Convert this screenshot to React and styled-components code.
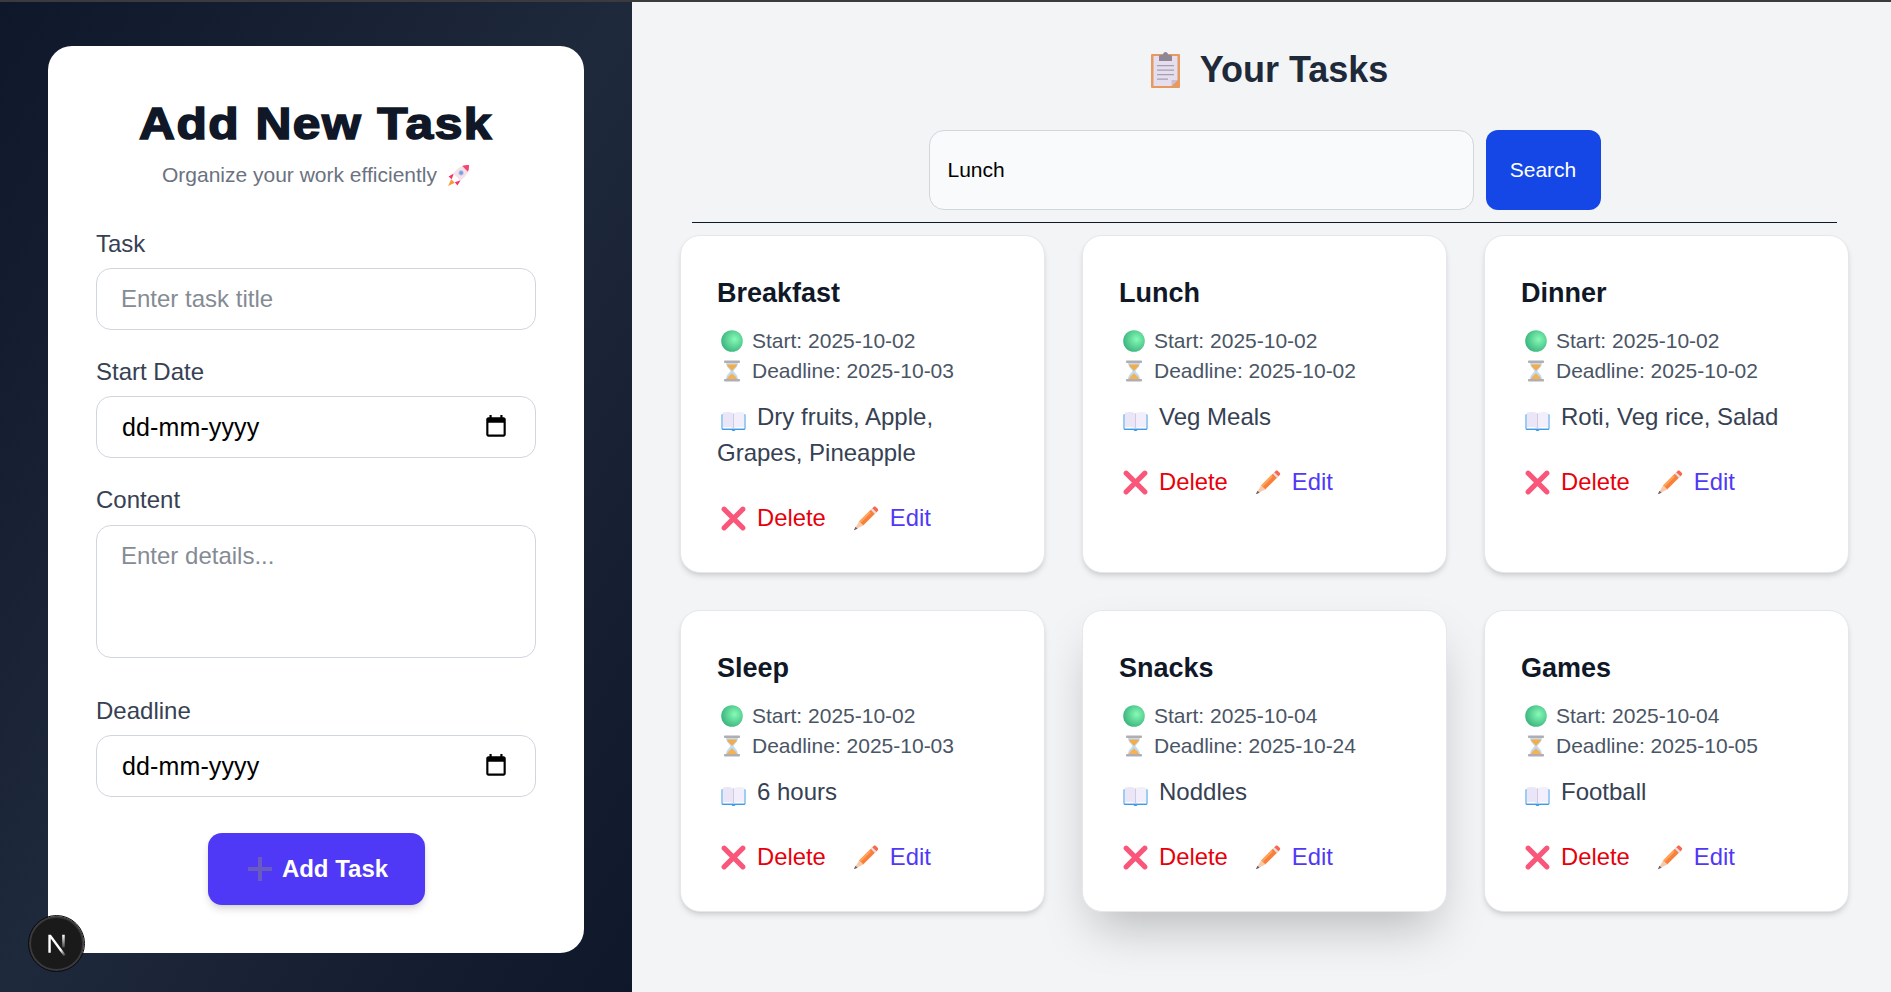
import React from "react";
import styled, { createGlobalStyle } from "styled-components";

const Global = createGlobalStyle`
  html, body { margin: 0; padding: 0; height: 100%; overflow: hidden; }
  body { font-family: "Liberation Sans", Arial, sans-serif; background: #f3f4f6; }
  * { box-sizing: border-box; }
`;

const Page = styled.div`
  height: 992px;
  display: flex;
  flex-direction: column;
  overflow: hidden;
`;
const TopEdge = styled.div`
  height: 2px;
  flex: none;
  background: #3b3b3d;
`;
const Columns = styled.div`
  flex: 1;
  display: flex;
  min-height: 0;
`;
const Sidebar = styled.aside`
  width: 632px;
  flex: none;
  padding: 44px 48px;
  background: linear-gradient(to bottom right, #0f172a, #1e293b 50%, #0f172a);
`;
const FormCard = styled.form`
  background: #fff;
  border-radius: 24px;
  padding: 48px;
  height: 907px;
`;
const FormTitle = styled.h1`
  margin: 2px 0 8px;
  font-size: 44px;
  line-height: 56px;
  font-weight: 900;
  letter-spacing: 1.3px;
  -webkit-text-stroke: 1.6px #101828;
  color: #101828;
  text-align: center;
  transform: scaleX(1.13);
`;
const FormSubtitle = styled.p`
  margin: 0 0 38px;
  font-size: 21px;
  line-height: 30px;
  color: #6b7280;
  display: flex;
  justify-content: center;
  align-items: center;
  gap: 10px;
`;
const Field = styled.div`
  margin-bottom: ${(p) => p.$gap ?? 26}px;
`;
const Label = styled.label`
  display: block;
  margin-bottom: ${(p) => p.$gap ?? 8}px;
  font-size: 24px;
  line-height: 32px;
  color: #364153;
`;
const controlBase = `
  display: block;
  width: 100%;
  border: 1.5px solid #d1d5dc;
  border-radius: 15px;
  background: #fff;
  font-family: "Liberation Sans", Arial, sans-serif;
  font-size: 24px;
  outline: none;
  color: #000;
  &::placeholder { color: #858b95; opacity: 1; }
`;
const TextInput = styled.input`
  ${controlBase}
  height: 62px;
  padding: 0 24px;
`;
const DateBox = styled.div`
  ${controlBase}
  height: 62px;
  padding: 0 26px 0 25px;
  font-size: 25px;
  letter-spacing: 0.12px;
  display: flex;
  align-items: center;
  justify-content: space-between;
`;
const CalendarIcon = styled.svg`
  width: 26px;
  height: 26px;
  fill: #000;
`;
const TextArea = styled.textarea`
  ${controlBase}
  height: 133px;
  padding: 16px 24px;
  resize: none;
  line-height: 28px;
`;
const SubmitRow = styled.div`
  display: flex;
  justify-content: center;
  margin-top: 36px;
`;
const SubmitButton = styled.button`
  width: 217px;
  height: 72px;
  padding: 0 0 0 4px;
  border: none;
  border-radius: 14px;
  background: #4f39f6;
  color: #fff;
  font-family: inherit;
  font-size: 24px;
  font-weight: 700;
  display: flex;
  align-items: center;
  justify-content: center;
  gap: 10px;
  box-shadow: 0 5px 8px -1px rgba(0, 0, 0, 0.14), 0 2px 5px -2px rgba(0, 0, 0, 0.1);
`;

const Main = styled.main`
  flex: 1;
  min-width: 0;
  padding: 48px 42px 0 48px;
  background: #f3f4f6;
`;
const Heading = styled.h2`
  margin: 0 0 40px;
  height: 40px;
  padding-left: 2px;
  display: flex;
  align-items: center;
  justify-content: center;
  gap: 12px;
  font-size: 36px;
  line-height: 40px;
  font-weight: 700;
  color: #1e2939;
`;
const HeadingIcon = styled.span`
  width: 45px;
  display: flex;
  justify-content: center;
`;
const SearchBar = styled.div`
  display: flex;
  justify-content: center;
  gap: 12px;
`;
const SearchInput = styled.input`
  width: 545px;
  height: 80px;
  padding: 0 18px;
  border: 1.5px solid #d1d5dc;
  border-radius: 15px;
  background: #f9fafb;
  font-family: inherit;
  font-size: 21px;
  color: #000;
  outline: none;
`;
const SearchButton = styled.button`
  width: 115px;
  height: 80px;
  border: none;
  border-radius: 12px;
  background: #1447e6;
  color: #fff;
  font-family: inherit;
  font-size: 21px;
`;
const Rule = styled.hr`
  height: 1px;
  margin: 12px;
  border: none;
  background: #101828;
`;
const Grid = styled.div`
  display: grid;
  grid-template-columns: repeat(3, 1fr);
  gap: 37px;
`;
const Card = styled.article`
  padding: 39px 36px 36px;
  background: #fff;
  border: 1px solid #e5e7eb;
  border-radius: 20px;
  box-shadow: ${(p) =>
    p.$raised
      ? "0 25px 50px -12px rgba(0,0,0,0.25)"
      : "0 4px 6px -1px rgba(0,0,0,0.12), 0 2px 4px -2px rgba(0,0,0,0.1)"};
`;
const CardTitle = styled.h3`
  margin: 0 0 15px;
  font-size: 27px;
  line-height: 36px;
  font-weight: 700;
  color: #101828;
`;
const MetaLine = styled.div`
  font-size: 21px;
  line-height: 30px;
  color: #4a5565;
  white-space: nowrap;
`;
const CardBody = styled.p`
  margin: 13px 0 29px;
  font-size: 24px;
  line-height: 36px;
  color: #364153;
`;
const Actions = styled.div`
  display: flex;
  gap: 24px;
  font-size: 23.8px;
  line-height: 36px;
`;
const ActionButton = styled.span`
  color: ${(p) => p.$color};
`;
const EmojiBox = styled.span`
  display: inline-flex;
  justify-content: center;
  align-items: center;
  width: ${(p) => p.$w}px;
  margin-right: ${(p) => p.$mr}px;
  vertical-align: ${(p) => p.$va ?? -4}px;
`;
const DevBadge = styled.div`
  position: fixed;
  left: 29px;
  top: 916px;
  width: 55px;
  height: 55px;
  border-radius: 50%;
  background: #1a1a1a;
  border: 2px solid #3a3a3c;
  outline: 1px solid #0b0b0c;
  display: flex;
  align-items: center;
  justify-content: center;
`;

const GreenCircle = () => (
  <svg width="22" height="22" viewBox="0 0 22 22">
    <defs>
      <radialGradient id="gc" cx="0.62" cy="0.42" r="0.62">
        <stop offset="0" stopColor="#86fbb6" />
        <stop offset="1" stopColor="#3db67f" />
      </radialGradient>
    </defs>
    <circle cx="11" cy="11" r="10.8" fill="url(#gc)" />
  </svg>
);
const Hourglass = () => (
  <svg width="18" height="22" viewBox="0 0 18 22">
    <path d="M3 2h12c0 5-3 6.500-4.600 9C12 13.500 15 15 15 20H3c0-5 3-6.500 4.600-9C6 8.500 3 7 3 2z" fill="#bfdcf2" />
    <path d="M3.800 4.500h10.400c-.6 2.800-3.600 4-5.200 6.500C7.400 8.500 4.400 7.300 3.800 4.500z" fill="#f2ad4a" />
    <path d="M9 13c1 2 4.400 3.300 5.200 6.500H3.800C4.600 16.300 8 15 9 13z" fill="#f4b155" />
    <rect x="1" y="0.500" width="16" height="2.500" rx=".8" fill="#b0adb3" />
    <rect x="1" y="19" width="16" height="2.500" rx=".8" fill="#b0adb3" />
  </svg>
);
const Book = () => (
  <svg width="25" height="20" viewBox="0 0 24 20">
    <path d="M0 4c0-.5.500-1 1-1v14h22V3c.5 0 1 .5 1 1v13.500c0 .8-.7 1.500-1.500 1.500H14l-1 1h-2l-1-1H1.500C.7 19 0 18.300 0 17.500z" fill="#3f9be8" />
    <path d="M1.500 1.500C5 .6 9 .8 12 2.500V17.500C9 16 5 15.800 1.500 16.500z" fill="#ebe6f7" />
    <path d="M22.500 1.500C19 .6 15 .8 12 2.500V17.500C15 16 19 15.800 22.500 16.500z" fill="#f3eefb" />
    <path d="M11.700 2.500h.6v15h-.6z" fill="#b8b2cc" />
    <path d="M1 17h22v1H1z" fill="#a9d2f4" />
  </svg>
);
const CrossMark = () => (
  <svg width="25" height="25" viewBox="0 0 24 24">
    <path d="M3 3l18 18M21 3L3 21" stroke="#f9567a" strokeWidth="4.800" strokeLinecap="round" fill="none" />
  </svg>
);
const Pencil = () => (
  <svg width="26" height="26" viewBox="0 0 24 24">
    <path d="M5.600 15.200L17.400 3.400l3.800 3.800L9.400 19z" fill="#f9803c" />
    <path d="M5.600 15.200L15 5.800l1.400 1.400L7 16.600z" fill="#ffa45a" />
    <path d="M17.400 3.400l1.600-1.600c.6-.6 1.500-.6 2.100 0l1.700 1.700c.6.600.6 1.500 0 2.100l-1.600 1.600z" fill="#f9674d" />
    <path d="M16.400 4.400l1.400-1.400 3.800 3.800-1.400 1.400z" fill="#e6dde6" />
    <path d="M5.600 15.200L9.400 19 .8 23.200z" fill="#f7c9a8" />
    <path d="M2.300 20l2 2-3.500 1.200z" fill="#6e5a70" />
  </svg>
);
const Clipboard = () => (
  <svg width="29" height="36" viewBox="0 0 29 36">
    <rect x="0" y="2" width="29" height="34" rx="1" fill="#e79a5f" />
    <path d="M2.500 4h24v24l-6 6h-18z" fill="#e4deef" />
    <path d="M26.500 28h-6v6z" fill="#c9bfd4" />
    <path d="M8 4.500c0-1 .8-1.500 1.500-1.500h2C12 1.500 13 0 14.500 0S17 1.500 17.500 3h2c.7 0 1.500.5 1.500 1.500V9H8z" fill="#8e8795" />
    <path d="M6 13h17v1.300H6zM6 17.500h17v1.300H6zM6 22h17v1.300H6zM6 26.500h11v1.300H6z" fill="#a79eb0" />
  </svg>
);
const Rocket = () => (
  <svg width="23" height="23" viewBox="0 0 22 22">
    <path d="M4 14.500L1 21l6.500-3z" fill="#f79a3c" />
    <path d="M6.500 9L1.500 12l3 2.500zM13 15.500l-3 5-2.500-3z" fill="#f5336c" />
    <path d="M21 1c.4 4.500-1 9.500-8 15L6 9C11.500 2 16.500.6 21 1z" fill="#f4e2ea" />
    <path d="M21 1c.2 2-.1 4.200-1 6.400L14.600 2C16.800 1.100 19 .8 21 1z" fill="#f7456f" />
    <circle cx="13.500" cy="8.500" r="2.200" fill="#6da0e8" stroke="#d2c3da" strokeWidth=".8" />
  </svg>
);
const PlusMark = () => (
  <svg width="24" height="24" viewBox="0 0 24 24">
    <path d="M12 1v22M1 12h22" stroke="#6a5bc1" strokeWidth="4" strokeLinecap="round" />
  </svg>
);
const NextLogo = () => (
  <svg width="30" height="30" viewBox="0 0 26 26">
    <defs>
      <linearGradient id="ng" x1="0.4" y1="0.2" x2="0.95" y2="1">
        <stop offset="0" stopColor="#fff" />
        <stop offset="0.6" stopColor="#fff" />
        <stop offset="1" stopColor="#fff" stopOpacity="0" />
      </linearGradient>
      <linearGradient id="ng2" x1="0" y1="0" x2="0" y2="1">
        <stop offset="0" stopColor="#fff" />
        <stop offset="1" stopColor="#fff" stopOpacity="0.2" />
      </linearGradient>
    </defs>
    <path d="M5.500 5h2.200l13 17.500-1.700 1.300L7.600 8.300V20.500H5.500z" fill="url(#ng)" />
    <rect x="17.500" y="5" width="2.200" height="11" fill="url(#ng2)" />
  </svg>
);
const CalendarGlyph = () => (
  <CalendarIcon viewBox="0 0 24 24">
    <path d="M19 3h-1V1h-2v2H8V1H6v2H5c-1.110 0-1.990.9-1.990 2L3 19c0 1.100.89 2 2 2h14c1.100 0 2-.9 2-2V5c0-1.100-.9-2-2-2zm0 16H5V8h14v11z" />
  </CalendarIcon>
);

const tasks = [
  { title: "Breakfast", start: "2025-10-02", end: "2025-10-03", body: "Dry fruits, Apple, Grapes, Pineapple" },
  { title: "Lunch", start: "2025-10-02", end: "2025-10-02", body: "Veg Meals" },
  { title: "Dinner", start: "2025-10-02", end: "2025-10-02", body: "Roti, Veg rice, Salad" },
  { title: "Sleep", start: "2025-10-02", end: "2025-10-03", body: "6 hours" },
  { title: "Snacks", start: "2025-10-04", end: "2025-10-24", body: "Noddles", raised: true },
  { title: "Games", start: "2025-10-04", end: "2025-10-05", body: "Football" },
];

function TaskCard({ task }) {
  return (
    <Card $raised={task.raised}>
      <CardTitle>{task.title}</CardTitle>
      <MetaLine>
        <EmojiBox $w={29} $mr={6}><GreenCircle /></EmojiBox>Start: {task.start}
      </MetaLine>
      <MetaLine>
        <EmojiBox $w={29} $mr={6}><Hourglass /></EmojiBox>Deadline: {task.end}
      </MetaLine>
      <CardBody>
        <EmojiBox $w={33} $mr={7} $va={-6}><Book /></EmojiBox>{task.body}
      </CardBody>
      <Actions>
        <ActionButton $color="#e7000b">
          <EmojiBox $w={33} $mr={7} $va={-5}><CrossMark /></EmojiBox>Delete
        </ActionButton>
        <ActionButton $color="#4f39f6">
          <EmojiBox $w={33} $mr={7} $va={-5}><Pencil /></EmojiBox>Edit
        </ActionButton>
      </Actions>
    </Card>
  );
}

export default function App() {
  return (
    <Page>
      <Global />
      <TopEdge />
      <Columns>
        <Sidebar>
          <FormCard onSubmit={(e) => e.preventDefault()}>
            <FormTitle>Add New Task</FormTitle>
            <FormSubtitle>Organize your work efficiently <Rocket /></FormSubtitle>
            <Field>
              <Label>Task</Label>
              <TextInput placeholder="Enter task title" />
            </Field>
            <Field>
              <Label>Start Date</Label>
              <DateBox>dd-mm-yyyy<CalendarGlyph /></DateBox>
            </Field>
            <Field $gap={37}>
              <Label $gap={9}>Content</Label>
              <TextArea placeholder="Enter details..." />
            </Field>
            <Field $gap={0}>
              <Label>Deadline</Label>
              <DateBox>dd-mm-yyyy<CalendarGlyph /></DateBox>
            </Field>
            <SubmitRow>
              <SubmitButton type="submit"><PlusMark />Add Task</SubmitButton>
            </SubmitRow>
          </FormCard>
        </Sidebar>
        <Main>
          <Heading>
            <HeadingIcon><Clipboard /></HeadingIcon>
            Your Tasks
          </Heading>
          <SearchBar>
            <SearchInput defaultValue="Lunch" />
            <SearchButton>Search</SearchButton>
          </SearchBar>
          <Rule />
          <Grid>
            {tasks.map((t) => <TaskCard key={t.title} task={t} />)}
          </Grid>
        </Main>
      </Columns>
      <DevBadge><NextLogo /></DevBadge>
    </Page>
  );
}
